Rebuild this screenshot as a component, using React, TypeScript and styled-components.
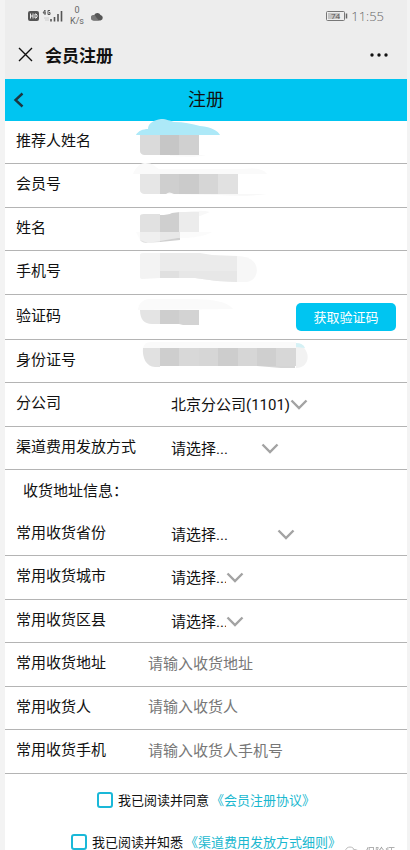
import type { ReactNode } from "react";
import styled, { createGlobalStyle } from "styled-components";

const GlobalStyle = createGlobalStyle`
  *, *::before, *::after { box-sizing: border-box; }
  body {
    margin: 0;
    background: #f3f3f3;
    color: #111;
    font-family: "Noto Sans CJK SC", sans-serif;
    font-size: 15px;
    line-height: 22px;
  }
  input, select, button { font: inherit; color: inherit; }
`;

const Viewport = styled.div`
  height: 100vh;
  overflow: hidden;
  padding: 0 3px 0 5px;
`;

const Screen = styled.main`
  background: #fff;
  min-height: 100%;
`;

const StatusBar = styled.div`
  display: flex;
  align-items: center;
  justify-content: space-between;
  height: 32px;
  padding: 0 23px;
  background: #ededed;
  color: #666;
  font-family: "Open Sans", sans-serif;
  font-weight: 300;
`;

const StatusGroup = styled.div`
  display: flex;
  align-items: center;
  gap: 3px;
`;

const Speed = styled.div`
  display: flex;
  flex-direction: column;
  align-items: center;
  width: 22px;
  font-family: Roboto, sans-serif;
  font-size: 9px;
  line-height: 11px;
  font-weight: 400;
`;

const Clock = styled.span`
  font-size: 13px;
  line-height: 20px;
`;

const AppBar = styled.header`
  display: flex;
  align-items: center;
  height: 47px;
  padding: 0 19px 2px 13px;
  background: #ededed;
`;

const IconButton = styled.button`
  display: flex;
  padding: 0;
  border: 0;
  background: none;
`;

const AppTitle = styled.h1`
  flex: 1;
  margin: 0 0 0 12px;
  font-size: 17px;
  line-height: 24px;
  font-weight: 700;
`;

const PageBar = styled.div`
  display: grid;
  grid-template-columns: 24px 1fr 24px;
  align-items: center;
  height: 42px;
  padding: 0 8px;
  background: #00c5f1;
`;

const PageTitle = styled.h2`
  margin: 0;
  padding-bottom: 4px;
  font-size: 18px;
  line-height: 26px;
  font-weight: 400;
  text-align: center;
`;

const Row = styled.div<{ $height?: number }>`
  position: relative;
  display: flex;
  align-items: center;
  min-height: ${(p) => p.$height ?? 43}px;
  padding: 0 11px;
  border-bottom: 1px solid #b4b4b4;
`;

const Label = styled.label<{ $width: number }>`
  flex: none;
  width: ${(p) => p.$width}px;
  padding-bottom: 5px;
`;

const TextInput = styled.input`
  flex: 1;
  min-width: 0;
  height: 26px;
  margin-bottom: 5px;
  padding: 0;
  border: 0;
  outline: 0;
  background: none;
  &::placeholder { color: #777; opacity: 1; }
`;

const SelectBox = styled.div`
  display: flex;
  align-items: center;
  padding-top: 1px;
`;

const Select = styled.select<{ $width: number }>`
  appearance: none;
  width: ${(p) => p.$width}px;
  height: 26px;
  padding: 0;
  border: 0;
  outline: 0;
  background: none;
  font-family: Roboto, "Noto Sans CJK SC", sans-serif;
`;

const CodeButton = styled.button`
  flex: none;
  width: 100px;
  height: 28px;
  padding: 0;
  border: 0;
  border-radius: 5px;
  background: #00c5f1;
  color: #fff;
  font-size: 13px;
  line-height: 20px;
`;

const SectionTitle = styled.h3`
  margin: 0;
  padding: 9px 18px 12px;
  font-size: 15px;
  line-height: 22px;
  font-weight: 400;
`;

const Agreements = styled.div`
  display: flex;
  flex-direction: column;
  align-items: center;
  gap: 22px;
  padding: 16px 0;
`;

const Agreement = styled.div`
  display: flex;
  align-items: center;
  font-size: 13px;
  line-height: 20px;
`;

const CheckBox = styled.input`
  appearance: none;
  width: 16px;
  height: 16px;
  margin: 0 5px 0 0;
  border: 2px solid #1ab8d8;
  border-radius: 3px;
  &:checked { background: #1ab8d8; }
`;

const AgreementLink = styled.a`
  margin-left: 2px;
  color: #1ab8cf;
  text-decoration: none;
`;

const Smudge = styled.svg`
  position: absolute;
  left: 125px;
  top: 0;
  overflow: visible;
  pointer-events: none;
`;

const Watermark = styled.div`
  position: fixed;
  right: 15px;
  bottom: -10px;
  display: flex;
  align-items: center;
  gap: 6px;
  color: #999;
  font-size: 10px;
  line-height: 16px;
`;

function Chevron() {
  return (
    <svg width="18" height="12" viewBox="0 0 18 12" fill="none" stroke="#a3a3a3" strokeWidth="2.400" aria-hidden="true">
      <path d="M1.500 1.500 9 9l7.500-7.500" />
    </svg>
  );
}

function Cells({ x = 10, y, h, colors }: { x?: number; y: number; h: number; colors: string[] }) {
  return (
    <>
      {colors.map((c, i) => (
        <rect key={i} x={x + Math.round(i * 19.4)} y={y} width="20" height={h} fill={c} />
      ))}
    </>
  );
}

interface MaskedProps {
  id: string;
  label: string;
  height?: number;
  smudge: ReactNode;
  children?: ReactNode;
}

function MaskedRow({ id, label, height, smudge, children }: MaskedProps) {
  return (
    <Row $height={height}>
      <Label htmlFor={id} $width={132}>{label}</Label>
      <TextInput id={id} />
      {children}
      <Smudge width="150" height="43" viewBox="0 0 150 43" aria-hidden="true">{smudge}</Smudge>
    </Row>
  );
}

interface SelectProps {
  id: string;
  label: string;
  option: string;
  width: number;
  height?: number;
}

function SelectRow({ id, label, option, width, height }: SelectProps) {
  return (
    <Row $height={height}>
      <Label htmlFor={id} $width={155}>{label}</Label>
      <SelectBox>
        <Select id={id} $width={width}>
          <option>{option}</option>
        </Select>
        <Chevron />
      </SelectBox>
    </Row>
  );
}

function InputRow({ id, label, hint, height }: { id: string; label: string; hint: string; height?: number }) {
  return (
    <Row $height={height}>
      <Label htmlFor={id} $width={132}>{label}</Label>
      <TextInput id={id} placeholder={hint} />
    </Row>
  );
}

export default function App() {
  return (
    <Viewport>
      <GlobalStyle />
      <Screen>
        <StatusBar>
          <StatusGroup>
            <svg width="35" height="14" viewBox="0 0 35 14" aria-hidden="true">
              <rect x="0" y="2" width="11" height="10" rx="2" fill="#555" />
              <path d="M2.500 4.500v5M5 4.500v5M2.500 7H5M7 5v4h1l1-1V6L8 5z" stroke="#ededed" fill="none" />
              <path d="M17 1l-2 3h3M17 1v5M22 1.500h-2v4h2v-2h-1" stroke="#555" fill="none" />
              <path d="M16 9h5M17 11h4" stroke="#ccc" />
              <path d="M23 10v2.500M26.500 8v4.500M30 5v7.500M33.500 2v10.500" stroke="#555" strokeWidth="1.600" />
            </svg>
            <Speed><span>0</span><span>K/s</span></Speed>
            <svg width="12" height="9" viewBox="0 0 12 9" aria-hidden="true">
              <path d="M3 8.500a2.500 2.500 0 0 1 0-5A3.500 3.500 0 0 1 9.500 3 2.800 2.800 0 0 1 9.500 8.500z" fill="#555" />
              <path d="M0 6a2.500 2.500 0 0 1 5-1l3 3.500H2.500A2.500 2.500 0 0 1 0 6z" fill="#777" />
            </svg>
          </StatusGroup>
          <StatusGroup>
            <svg width="22" height="12" viewBox="0 0 22 12" aria-hidden="true">
              <rect x="0.500" y="1.500" width="18" height="9" rx="1" fill="#ededed" stroke="#777" />
              <rect x="2" y="3" width="12" height="6" fill="#c4c4c4" />
              <path d="M20.500 3.500v5" stroke="#666" strokeWidth="1.500" />
              <text x="9.500" y="9" fontSize="8" fontWeight="400" textAnchor="middle" fill="#555">74</text>
            </svg>
            <Clock>11:55</Clock>
          </StatusGroup>
        </StatusBar>

        <AppBar>
          <IconButton aria-label="关闭">
            <svg width="15" height="15" viewBox="0 0 15 15" stroke="#111" strokeWidth="1.400">
              <path d="M1 1l13 13M14 1L1 14" />
            </svg>
          </IconButton>
          <AppTitle>会员注册</AppTitle>
          <IconButton aria-label="更多">
            <svg width="18" height="4" viewBox="0 0 18 4" fill="#111">
              <circle cx="2" cy="2" r="1.700" />
              <circle cx="9" cy="2" r="1.700" />
              <circle cx="16" cy="2" r="1.700" />
            </svg>
          </IconButton>
        </AppBar>

        <PageBar>
          <IconButton aria-label="返回">
            <svg width="12" height="16" viewBox="0 0 12 16" fill="none" stroke="#1c3640" strokeWidth="2.400">
              <path d="M9.500 1.500 2.500 8l7 6.500" />
            </svg>
          </IconButton>
          <PageTitle>注册</PageTitle>
        </PageBar>

        <form onSubmit={(e) => e.preventDefault()}>
          <MaskedRow
            id="referrer"
            label="推荐人姓名"
            smudge={
              <>
                <path d="M6 14c2-4 7-6 12-6 0-6 6-9 13-10 6 0 9 2 13 3 10 0 18 2 26 4 12 1 18 5 20 9z" fill="#ade9f8" />
                <path d="M10 14h20v20H14q-4-1-4-4z" fill="#dadada" />
                <Cells x={30} y={14} h={20} colors={["#c6c6c6", "#d0d0d0"]} />
                <path d="M40 34h36q-10 3-36 1z" fill="#fafafa" />
              </>
            }
          />
          <MaskedRow
            id="member-no"
            label="会员号"
            height={44}
            smudge={
              <>
                <path d="M3 10c2-5 6-11 12-11 8 0 9 3 14 6h84c8-1 20-1 24 5z" fill="#fafafa" />
                <path d="M10 10h20v20H14q-4-1-4-4z" fill="#e6e6e6" />
                <Cells x={30} y={10} h={20} colors={["#cfcfcf", "#cbcbcb", "#d6d6d6", "#e1e1e1"]} />
                <path d="M36 30q3-3 8 0h93q-20 3-50 1z" fill="#f8f8f8" />
              </>
            }
          />
          <MaskedRow
            id="name"
            label="姓名"
            smudge={
              <>
                <path d="M50 5q20-4 30-1l-10 4z" fill="#f8f8f8" />
                <path d="M10 8q0-2 4-2h16v28l-14 1q-6-1-6-4z" fill="#e1e1e1" />
                <path d="M30 7q8 0 12-2l8-1v28l-20 2z" fill="#cfcfcf" />
                <path d="M49 4h20v20H49z" fill="#ececec" />
                <path d="M6 24h76q-10 6-34 6l-30 5-8-3z" fill="#f8f8f8" fillOpacity="0.600" />
              </>
            }
          />
          <MaskedRow
            id="phone"
            label="手机号"
            height={44}
            smudge={
              <>
                <path d="M10 4q0-2 3-2h17v25l-18 1q-2 0-2-2z" fill="#f3f3f3" />
                <path d="M30 2h40l12 2 25 1v26l-20-1-22-3H30z" fill="#ebebeb" />
                <path d="M30 20h19v7H30z" fill="#e0e0e0" />
                <path d="M49 20h58v11l-20-1-22-3H49z" fill="#e7e7e7" />
                <path d="M107 5q12 0 17 6c6 8 2 20-9 20h-8z" fill="#f7f7f7" />
              </>
            }
          />
          <MaskedRow
            id="code"
            label="验证码"
            height={45}
            smudge={
              <>
                <path d="M8 15c0-5 4-11 12-11h46c18 1 30 2 37 10z" fill="#fafafa" />
                <path d="M10 15h20v14h-8c-8 0-12-5-12-14z" fill="#e4e4e4" />
                <path d="M30 15h19v14H30z" fill="#cecece" />
                <path d="M49 15h20v15H53l-4-1z" fill="#d3d3d3" />
              </>
            }
          >
            <CodeButton type="button">获取验证码</CodeButton>
          </MaskedRow>
          <MaskedRow
            id="id-no"
            label="身份证号"
            smudge={
              <>
                <path d="M13 8q1-6 8-6h145v6z" fill="#fafafa" />
                <path d="M13 8h17v19h-5c-9 0-13-10-12-19z" fill="#e1e1e1" />
                <Cells x={30} y={8} h={18} colors={["#cecece", "#d8d8d8", "#d6d6d6", "#cdcdcd", "#d6d6d6", "#cfcfcf", "#d7d7d7"]} />
                <path d="M127 26h38v2h-14z" fill="#d5d5d5" />
                <path d="M166 4c15 2 16 24 0 24z" fill="#f2f2f2" />
                <path d="M166 3q7 0 9 5l-9-1z" fill="#d5f1f5" />
              </>
            }
          />
          <SelectRow id="branch" label="分公司" option="北京分公司(1101)" width={119} height={44} />
          <SelectRow id="channel" label="渠道费用发放方式" option="请选择..." width={90} />
          <SectionTitle>收货地址信息：</SectionTitle>
          <SelectRow id="province" label="常用收货省份" option="请选择..." width={106} />
          <SelectRow id="city" label="常用收货城市" option="请选择..." width={55} height={44} />
          <SelectRow id="district" label="常用收货区县" option="请选择..." width={55} />
          <InputRow id="address" label="常用收货地址" hint="请输入收货地址" height={44} />
          <InputRow id="receiver" label="常用收货人" hint="请输入收货人" />
          <InputRow id="receiver-phone" label="常用收货手机" hint="请输入收货人手机号" height={44} />

          <Agreements>
            <Agreement>
              <CheckBox id="agree-member" type="checkbox" />
              <label htmlFor="agree-member">我已阅读并同意</label>
              <AgreementLink href="#member">《会员注册协议》</AgreementLink>
            </Agreement>
            <Agreement>
              <CheckBox id="agree-channel" type="checkbox" />
              <label htmlFor="agree-channel">我已阅读并知悉</label>
              <AgreementLink href="#channel">《渠道费用发放方式细则》</AgreementLink>
            </Agreement>
          </Agreements>
        </form>
        <Watermark>
          <svg width="14" height="12" viewBox="0 0 14 12" fill="none" stroke="#bbb" aria-hidden="true">
            <ellipse cx="5" cy="5" rx="4.500" ry="4" />
            <ellipse cx="10" cy="7" rx="3.500" ry="3.500" />
          </svg>
          保险师
        </Watermark>
      </Screen>
    </Viewport>
  );
}
